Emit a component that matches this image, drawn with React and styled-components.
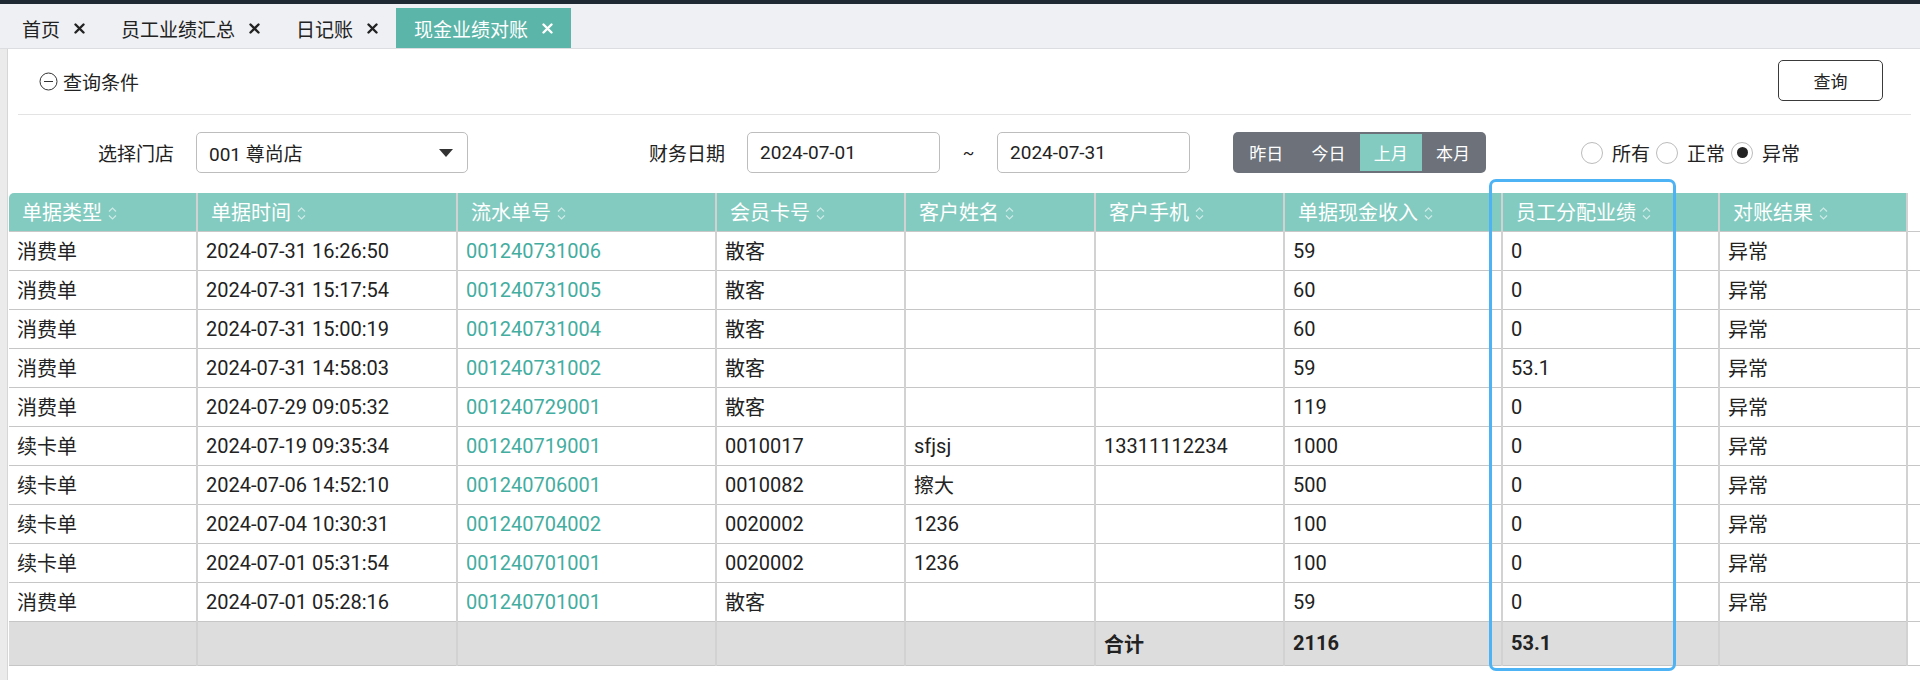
import React from 'react'
import styled, { createGlobalStyle } from 'styled-components'

const Global = createGlobalStyle`
  html, body {
    margin: 0;
    padding: 0;
    background: #fff;
  }
  body {
    font-family: Roboto, "Noto Sans CJK SC", "Noto Sans", sans-serif;
    color: #222;
  }
  * { box-sizing: border-box; }
`

const Page = styled.div`
  width: 1920px;
  height: 680px;
  overflow: hidden;
  display: flex;
  flex-direction: column;
  border-top: 4px solid #1f2933;
`

const TabBar = styled.div`
  height: 45px;
  background: #eef0f3;
  border-bottom: 1px solid #dcdde0;
  display: flex;
  align-items: flex-end;
  padding-left: 4px;
`

const Tab = styled.div`
  height: 40px;
  display: flex;
  align-items: center;
  gap: 14px;
  padding: 0 18px;
  font-size: 19px;
  color: ${p => (p.$active ? '#fff' : '#222')};
  background: ${p => (p.$active ? '#5bb5a8' : 'transparent')};
`

const Body = styled.div`
  flex: 1;
  display: flex;
`

const SideStrip = styled.div`
  width: 8px;
  background: #ebebeb;
  border-right: 1px solid #d6d6d6;
`

const Panel = styled.div`
  flex: 1;
  display: flex;
  flex-direction: column;
`

const QueryHead = styled.div`
  height: 66px;
  margin: 0 9px 0 10px;
  padding: 0 28px 0 21px;
  border-bottom: 1px solid #e3e3e3;
  display: flex;
  align-items: center;
  justify-content: space-between;
`

const QueryTitle = styled.div`
  display: flex;
  align-items: center;
  gap: 5px;
  font-size: 19px;
  color: #222;
`

const QueryButton = styled.button`
  width: 105px;
  height: 41px;
  margin-top: -2px;
  border: 1.5px solid #3a3a3a;
  border-radius: 5px;
  background: #fff;
  font-family: inherit;
  font-size: 17px;
  color: #222;
`

const FilterRow = styled.div`
  display: flex;
  align-items: center;
  height: 41px;
  margin: 17px 0 20px;
  padding-left: 90px;
`

const Label = styled.span`
  font-size: 19px;
  color: #222;
  margin-right: 22px;
  margin-left: ${p => p.$ml || 0}px;
`

const Field = styled.div`
  width: ${p => p.$w}px;
  height: 41px;
  border: 1px solid #bdbdbd;
  border-radius: 5px;
  display: flex;
  align-items: center;
  justify-content: space-between;
  padding: 0 12px 0 12px;
  font-size: 19px;
  color: #222;
`

const Caret = styled.span`
  width: 0;
  height: 0;
  border-left: 7px solid transparent;
  border-right: 7px solid transparent;
  border-top: 8px solid #333;
  margin-right: 2px;
`

const Tilde = styled.span`
  width: 57px;
  text-align: center;
  font-size: 17px;
`

const BtnGroup = styled.div`
  margin-left: 43px;
  width: 253px;
  height: 41px;
  display: flex;
  border-radius: 5px;
  overflow: hidden;
  background: #6c717a;
  padding: 2px;
`

const GroupBtn = styled.div`
  flex: 1;
  display: flex;
  align-items: center;
  justify-content: center;
  font-size: 17px;
  color: #fff;
  background: ${p => (p.$active ? '#83cbc0' : 'transparent')};
`

const Radios = styled.div`
  margin-left: 95px;
  display: flex;
  align-items: center;
  font-size: 19px;
`

const RadioItem = styled.label`
  display: flex;
  align-items: center;
  gap: 9px;
  margin-right: 6px;
`

const RadioDot = styled.span`
  width: 22px;
  height: 22px;
  border-radius: 50%;
  border: 1px solid #bcbcbc;
  display: flex;
  align-items: center;
  justify-content: center;
  &::after {
    content: '';
    width: 11px;
    height: 11px;
    border-radius: 50%;
    background: ${p => (p.$checked ? '#222' : 'transparent')};
  }
`

const TableWrap = styled.div`
  position: relative;
  margin-left: 1px;
`

const Grid = styled.table`
  width: 1911px;
  table-layout: fixed;
  border-collapse: collapse;
  font-size: 20px;
`

const Th = styled.th`
  height: 38px;
  padding: 0 8px 0 13px;
  text-align: left;
  font-weight: 400;
  color: #fff;
  background: ${p => (p.$blank ? '#fff' : '#83cbc0')};
  border-left: 2px solid #d2d2d2;
  border-bottom: 1px solid #c8c8c8;
  white-space: nowrap;
  &:first-child {
    border-left: none;
    border-top-left-radius: 5px;
  }
`

const Td = styled.td`
  height: 39px;
  padding: 0 8px;
  border-left: 2px solid #d2d2d2;
  border-bottom: 1px solid #c6c6c6;
  white-space: nowrap;
  color: ${p => (p.$link ? '#43ad9f' : '#222')};
  &:first-child { border-left: none; }
`

const TotalRow = styled.tr`
  background: #dddddd;
  td {
    height: 44px;
    font-weight: 700;
  }
  td:last-child { background: #fff; }
`

const SortMark = styled.svg`
  margin-left: 6px;
  vertical-align: -1px;
`

const Highlight = styled.div`
  position: absolute;
  left: 1480px;
  top: -14px;
  width: 187px;
  height: 492px;
  border: 3px solid #4db3f5;
  border-radius: 7px;
  pointer-events: none;
`

function CloseIcon({ color }) {
  return (
    <svg width="11" height="11" viewBox="0 0 11 11">
      <path d="M1.5 1.5 L9.5 9.5 M9.5 1.5 L1.5 9.5" stroke={color} strokeWidth="2.4" strokeLinecap="round" />
    </svg>
  )
}

function Sort() {
  return (
    <SortMark width="9" height="15" viewBox="0 0 9 15">
      <path d="M1 5.5 L4.5 2 L8 5.5 M1 9.5 L4.5 13 L8 9.5" fill="none" stroke="rgba(255,255,255,0.6)" strokeWidth="1.2" />
    </SortMark>
  )
}

const tabs = ['首页', '员工业绩汇总', '日记账', '现金业绩对账']
const columns = ['单据类型', '单据时间', '流水单号', '会员卡号', '客户姓名', '客户手机', '单据现金收入', '员工分配业绩', '对账结果']
const widths = [188, 260, 259, 189, 190, 189, 218, 217, 188, 13]

const rows = [
  ['消费单', '2024-07-31 16:26:50', '001240731006', '散客', '', '', '59', '0', '异常'],
  ['消费单', '2024-07-31 15:17:54', '001240731005', '散客', '', '', '60', '0', '异常'],
  ['消费单', '2024-07-31 15:00:19', '001240731004', '散客', '', '', '60', '0', '异常'],
  ['消费单', '2024-07-31 14:58:03', '001240731002', '散客', '', '', '59', '53.1', '异常'],
  ['消费单', '2024-07-29 09:05:32', '001240729001', '散客', '', '', '119', '0', '异常'],
  ['续卡单', '2024-07-19 09:35:34', '001240719001', '0010017', 'sfjsj', '13311112234', '1000', '0', '异常'],
  ['续卡单', '2024-07-06 14:52:10', '001240706001', '0010082', '擦大', '', '500', '0', '异常'],
  ['续卡单', '2024-07-04 10:30:31', '001240704002', '0020002', '1236', '', '100', '0', '异常'],
  ['续卡单', '2024-07-01 05:31:54', '001240701001', '0020002', '1236', '', '100', '0', '异常'],
  ['消费单', '2024-07-01 05:28:16', '001240701001', '散客', '', '', '59', '0', '异常'],
]

export default function App() {
  return (
    <>
      <Global />
      <Page>
        <TabBar>
          {tabs.map((t, i) => {
            const active = i === tabs.length - 1
            return (
              <Tab key={t} $active={active}>
                {t}
                <CloseIcon color={active ? '#fff' : '#222'} />
              </Tab>
            )
          })}
        </TabBar>
        <Body>
          <SideStrip />
          <Panel>
            <QueryHead>
              <QueryTitle>
                <svg width="19" height="19" viewBox="0 0 19 19">
                  <circle cx="9.5" cy="9.5" r="8.5" fill="none" stroke="#333" strokeWidth="1" />
                  <path d="M5 9.5 H14" stroke="#333" strokeWidth="1" />
                </svg>
                查询条件
              </QueryTitle>
              <QueryButton>查询</QueryButton>
            </QueryHead>

            <FilterRow>
              <Label>选择门店</Label>
              <Field $w={272}>
                001 尊尚店
                <Caret />
              </Field>
              <Label $ml={181}>财务日期</Label>
              <Field $w={193}>2024-07-01</Field>
              <Tilde>~</Tilde>
              <Field $w={193}>2024-07-31</Field>
              <BtnGroup>
                <GroupBtn>昨日</GroupBtn>
                <GroupBtn>今日</GroupBtn>
                <GroupBtn $active>上月</GroupBtn>
                <GroupBtn>本月</GroupBtn>
              </BtnGroup>
              <Radios>
                <RadioItem><RadioDot />所有</RadioItem>
                <RadioItem><RadioDot />正常</RadioItem>
                <RadioItem><RadioDot $checked />异常</RadioItem>
              </Radios>
            </FilterRow>

            <TableWrap>
              <Grid>
                <colgroup>
                  {widths.map((w, i) => <col key={i} style={{ width: w }} />)}
                </colgroup>
                <thead>
                  <tr>
                    {columns.map(c => (
                      <Th key={c}>{c}<Sort /></Th>
                    ))}
                    <Th $blank />
                  </tr>
                </thead>
                <tbody>
                  {rows.map((r, i) => (
                    <tr key={i}>
                      {r.map((v, j) => (
                        <Td key={j} $link={j === 2}>{v}</Td>
                      ))}
                      <Td />
                    </tr>
                  ))}
                  <TotalRow>
                    <Td /><Td /><Td /><Td /><Td />
                    <Td>合计</Td>
                    <Td>2116</Td>
                    <Td>53.1</Td>
                    <Td />
                    <Td />
                  </TotalRow>
                </tbody>
              </Grid>
              <Highlight />
            </TableWrap>
          </Panel>
        </Body>
      </Page>
    </>
  )
}
